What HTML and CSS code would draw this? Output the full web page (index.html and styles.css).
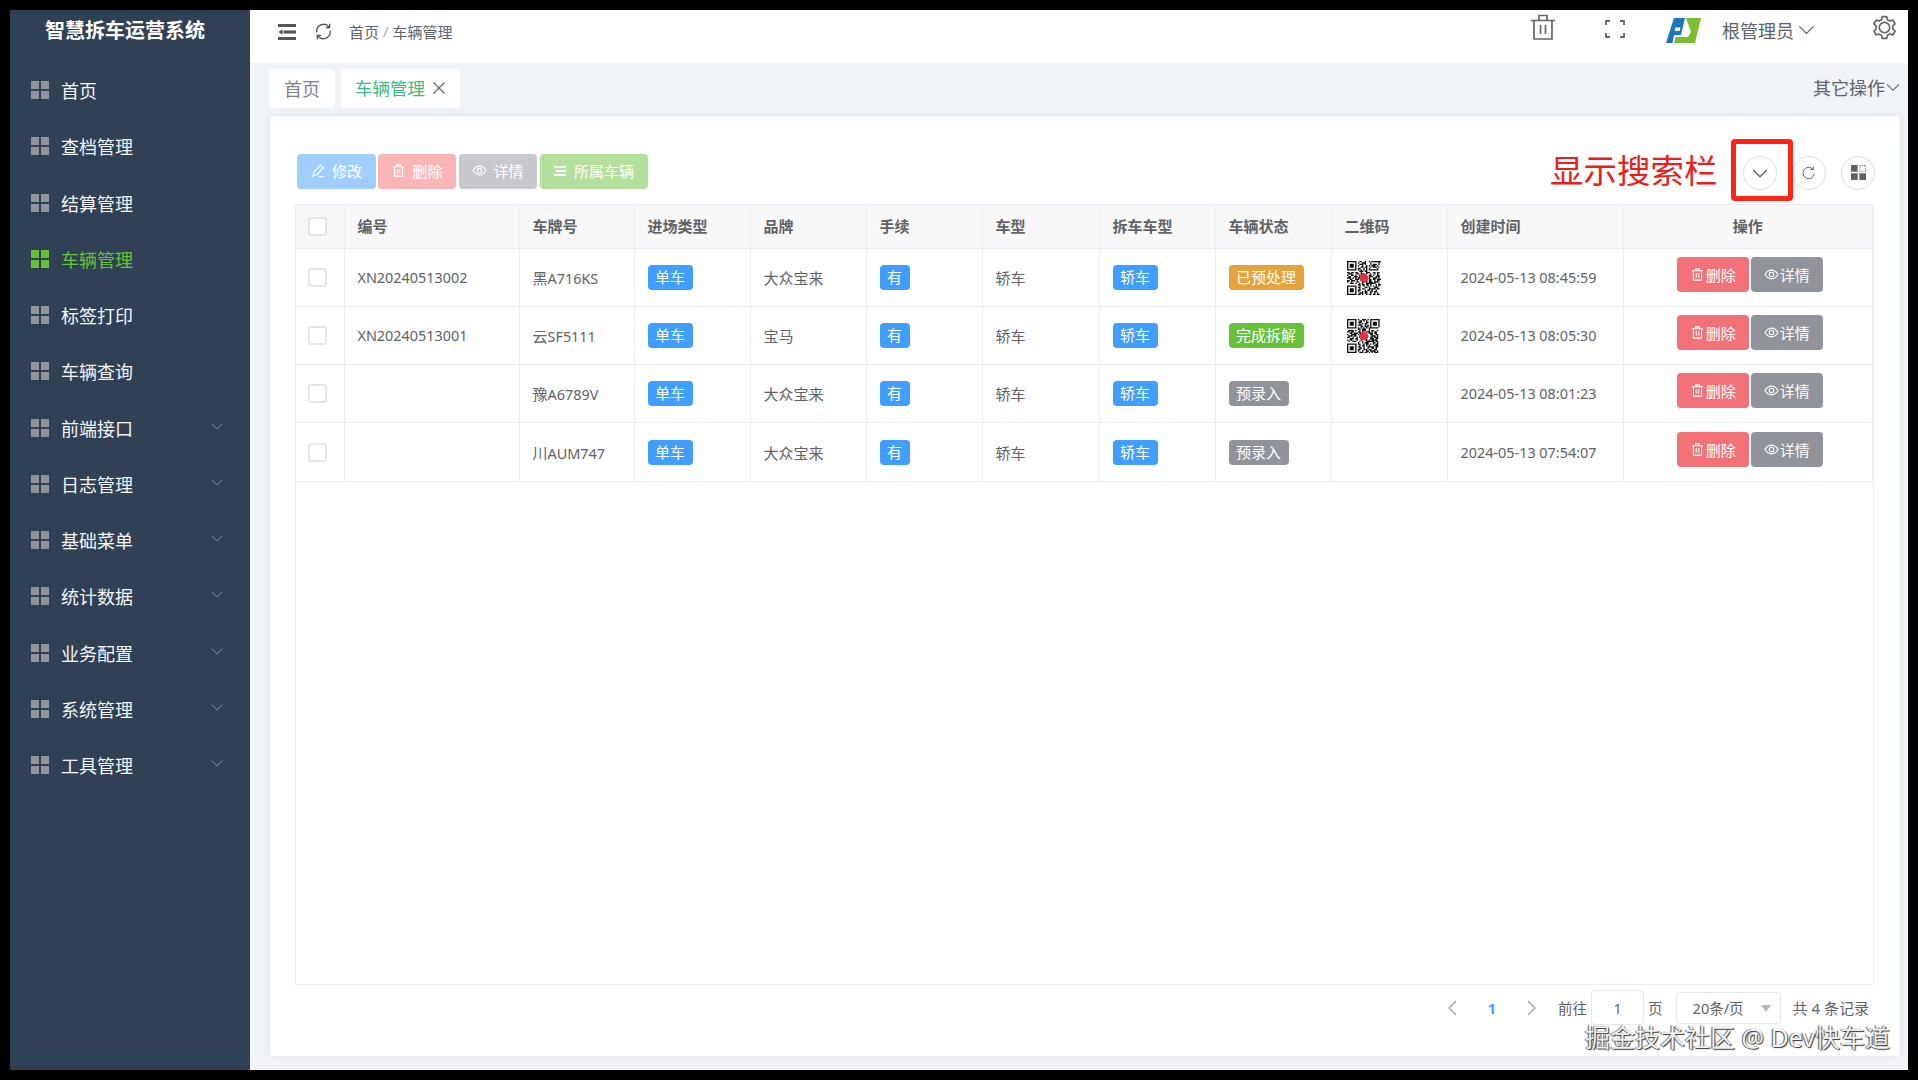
FILE: index.html
```html
<!DOCTYPE html>
<html lang="zh">
<head>
<meta charset="utf-8">
<title>智慧拆车运营系统</title>
<link rel="stylesheet" href="styles.css">
</head>
<body>
<svg class="defs" width="0" height="0">
  <symbol id="i-grid" viewBox="0 0 18 18"><path d="M0 0h8v8H0zM10 0h8v8h-8zM0 10h8v8H0zM10 10h8v8h-8z" fill="currentColor"/></symbol>
  <symbol id="i-down" viewBox="0 0 24 24"><path d="M3 8l9 9 9-9" fill="none" stroke="currentColor" stroke-width="1.6"/></symbol>
  <symbol id="i-trash" viewBox="0 0 24 24"><path d="M3 6h18M9 6V3h6v3M5.500 6v15h13V6M10 10v7M14 10v7" fill="none" stroke="currentColor" stroke-width="1.700"/></symbol>
  <symbol id="i-eye" viewBox="0 0 24 24"><path d="M1.500 12C5 6.500 8.500 5 12 5s7 1.500 10.500 7C19 17.500 15.500 19 12 19s-7-1.500-10.500-7z" fill="none" stroke="currentColor" stroke-width="1.700"/><circle cx="12" cy="12" r="3.600" fill="none" stroke="currentColor" stroke-width="1.700"/></symbol>
  <symbol id="i-edit" viewBox="0 0 24 24"><path d="M3 21l1.500-6L15 3.500l4.500 4L9 19zM12 22h10" fill="none" stroke="currentColor" stroke-width="1.700"/></symbol>
  <symbol id="i-qr1" viewBox="0 0 25 25"><path fill="none" stroke="#111" d="M0 .5h7m2 0h2m2 0h1m2 0h1m1 0h7M0 1.500h1m5 0h1m1 0h1m2 0h3m3 0h1m5 0h1M0 2.500h1m1 0h3m1 0h1m2 0h3m1 0h1m3 0h1m1 0h3m1 0h1M0 3.500h1m1 0h3m1 0h1m1 0h1m2 0h1m2 0h1m1 0h1m1 0h3m1 0h1M0 4.500h1m1 0h3m1 0h1m3 0h2m1 0h2m2 0h1m1 0h3m1 0h1M0 5.500h1m5 0h1m1 0h2m2 0h1m1 0h1m1 0h1m5 0h1M0 6.500h7m1 0h1m1 0h1m1 0h1m1 0h1m1 0h7M9 7.500h3m1 0h2M0 8.500h2m1 0h2m1 0h2m2 0h1m3 0h3m2 0h2m1 0h2M1 9.500h3m3 0h2m1 0h3m1 0h1m2 0h1m2 0h1m1 0h1M0 10.500h1m2 0h2m1 0h1m2 0h1m6 0h2m1 0h1m2 0h2M1 11.500h2m2 0h3m1 0h1m6 0h3m2 0h3M0 12.500h3m1 0h1m1 0h1m1 0h2m6 0h1m2 0h3m1 0h1M2 13.500h2m2 0h3m1 0h1m5 0h2m1 0h2m1 0h3M0 14.500h2m1 0h3m1 0h1m2 0h1m3 0h1m1 0h2m2 0h1m1 0h2M0 15.500h1m2 0h1m3 0h2m2 0h2m1 0h1m1 0h3m1 0h3M2 16.500h3m1 0h1m2 0h1m1 0h1m2 0h7m2 0h1M8 17.500h2m1 0h2m1 0h2m1 0h1m3 0h1m1 0h2M0 18.500h7m2 0h1m2 0h1m2 0h1m1 0h1m1 0h1m1 0h1m1 0h1M0 19.500h1m5 0h1m1 0h2m3 0h2m1 0h1m3 0h3M0 20.500h1m1 0h3m1 0h1m2 0h1m1 0h2m3 0h5m1 0h2M0 21.500h1m1 0h3m1 0h1m1 0h2m3 0h1m1 0h2m1 0h1m2 0h1M0 22.500h1m1 0h3m1 0h1m1 0h1m2 0h1m1 0h2m2 0h2m1 0h2M0 23.500h1m5 0h1m2 0h3m1 0h2m2 0h1m2 0h1m1 0h1M0 24.500h7m1 0h2m1 0h1m2 0h1m1 0h2m1 0h2m1 0h2"/><circle cx="12.500" cy="12.500" r="3.200" fill="#e8303c"/></symbol>
  <symbol id="i-qr2" viewBox="0 0 25 25"><path fill="none" stroke="#111" d="M0 .5h7m1 0h1m2 0h3m1 0h1m1 0h7M0 1.500h1m5 0h1m2 0h2m1 0h1m1 0h1m2 0h1m5 0h1M0 2.500h1m1 0h3m1 0h1m1 0h3m3 0h2m1 0h1m1 0h3m1 0h1M0 3.500h1m1 0h3m1 0h1m2 0h1m1 0h1m1 0h2m2 0h1m1 0h3m1 0h1M0 4.500h1m1 0h3m1 0h1m1 0h3m2 0h1m1 0h1m1 0h1m1 0h3m1 0h1M0 5.500h1m5 0h1m3 0h2m1 0h3m1 0h1m5 0h1M0 6.500h7m1 0h1m1 0h1m1 0h1m1 0h1m1 0h7M8 7.500h2m1 0h3m2 0h1M1 8.500h4m1 0h1m2 0h1m1 0h3m2 0h1m1 0h2m2 0h1M0 9.500h2m1 0h2m3 0h2m1 0h1m2 0h3m1 0h1m1 0h2M2 10.500h2m1 0h3m1 0h2m5 0h3m1 0h2M0 11.500h1m2 0h4m1 0h1m1 0h1m6 0h2m2 0h2M1 12.500h3m1 0h2m2 0h2m7 0h3m1 0h1M0 13.500h2m2 0h1m2 0h1m1 0h2m6 0h2m1 0h3M2 14.500h3m1 0h2m2 0h1m3 0h1m2 0h3m1 0h2M0 15.500h1m1 0h2m3 0h1m2 0h1m2 0h2m1 0h1m1 0h4M1 16.500h1m2 0h3m2 0h1m1 0h1m2 0h6m1 0h2M8 17.500h1m2 0h1m1 0h3m3 0h2m1 0h1M0 18.500h7m1 0h2m2 0h1m1 0h2m1 0h1m1 0h1m1 0h2M0 19.500h1m5 0h1m2 0h1m1 0h2m1 0h1m1 0h1m3 0h3M0 20.500h1m1 0h3m1 0h1m1 0h2m2 0h1m2 0h5m1 0h2M0 21.500h1m1 0h3m1 0h1m2 0h2m1 0h1m2 0h1m2 0h2m1 0h1M0 22.500h1m1 0h3m1 0h1m1 0h2m2 0h3m1 0h2m2 0h2M0 23.500h1m5 0h1m1 0h1m2 0h1m2 0h2m1 0h4m1 0h1M0 24.500h7m2 0h3m1 0h2m1 0h1m1 0h1m1 0h3"/><circle cx="12.500" cy="12.500" r="3.200" fill="#e8303c"/></symbol>
</svg>
<div class="frame">
  <aside class="sidebar">
    <div class="brand">智慧拆车运营系统</div>
    <nav class="menu">
      <a class="menu-item"><svg class="m-icon"><use href="#i-grid"/></svg><span>首页</span></a>
      <a class="menu-item"><svg class="m-icon"><use href="#i-grid"/></svg><span>查档管理</span></a>
      <a class="menu-item"><svg class="m-icon"><use href="#i-grid"/></svg><span>结算管理</span></a>
      <a class="menu-item active"><svg class="m-icon"><use href="#i-grid"/></svg><span>车辆管理</span></a>
      <a class="menu-item"><svg class="m-icon"><use href="#i-grid"/></svg><span>标签打印</span></a>
      <a class="menu-item"><svg class="m-icon"><use href="#i-grid"/></svg><span>车辆查询</span></a>
      <a class="menu-item"><svg class="m-icon"><use href="#i-grid"/></svg><span>前端接口</span><svg class="m-arrow"><use href="#i-down"/></svg></a>
      <a class="menu-item"><svg class="m-icon"><use href="#i-grid"/></svg><span>日志管理</span><svg class="m-arrow"><use href="#i-down"/></svg></a>
      <a class="menu-item"><svg class="m-icon"><use href="#i-grid"/></svg><span>基础菜单</span><svg class="m-arrow"><use href="#i-down"/></svg></a>
      <a class="menu-item"><svg class="m-icon"><use href="#i-grid"/></svg><span>统计数据</span><svg class="m-arrow"><use href="#i-down"/></svg></a>
      <a class="menu-item"><svg class="m-icon"><use href="#i-grid"/></svg><span>业务配置</span><svg class="m-arrow"><use href="#i-down"/></svg></a>
      <a class="menu-item"><svg class="m-icon"><use href="#i-grid"/></svg><span>系统管理</span><svg class="m-arrow"><use href="#i-down"/></svg></a>
      <a class="menu-item"><svg class="m-icon"><use href="#i-grid"/></svg><span>工具管理</span><svg class="m-arrow"><use href="#i-down"/></svg></a>
    </nav>
  </aside>
  <main class="main">
    <header class="topbar">
      <svg class="hamburger" viewBox="0 0 18 16"><path d="M0 0h18v3H0zM5.500 6.500H18v3H5.500zM0 13h18v3H0zM4.500 5.200v5.600L.5 8z" fill="#555"/></svg>
      <svg class="reload" viewBox="0 0 24 24"><path d="M3.500 13A8.800 8.800 0 0 1 19 6.200M20.500 11A8.800 8.800 0 0 1 5 17.800M19.800 2.200V7h-4.800M4.200 21.800V17H9" fill="none" stroke="#555" stroke-width="1.700"/></svg>
      <div class="crumbs"><span>首页</span><i>/</i><span>车辆管理</span></div>
      <div class="top-right">
        <svg class="t-trash" viewBox="0 0 24 26"><path d="M0 6.500h24M8 6.500V1.500h8v5M3 6.500V25h18V6.500M9.500 11v9M14.500 11v9" fill="none" stroke="#666" stroke-width="1.700"/></svg>
        <svg class="t-full" viewBox="0 0 20 18"><path d="M1 5V1h4M15 1h4v4M1 13v4h4M15 17h4v-4" fill="none" stroke="#666" stroke-width="1.800"/></svg>
        <svg class="t-logo" viewBox="0 0 35 25"><path fill-rule="evenodd" d="M0 25L8 0h11l-4 17H8l-1.500 8zM9.500 9.500h5l-1 3.500h-5z" fill="#1b75b8"/><path d="M20 0h15l-6 25H8l1.500-6h12.500L25 14z" fill="#7dbb2f"/></svg>
        <div class="user"><span>根管理员</span><svg class="u-arrow"><use href="#i-down"/></svg></div>
        <svg class="t-gear" viewBox="0 0 24 24"><path d="M9.800 1.500h4.400l.6 3 2.300 1.300 2.900-1 2.200 3.800-2.300 2a8 8 0 0 1 0 2.800l2.300 2-2.200 3.800-2.900-1-2.300 1.300-.6 3H9.800l-.6-3-2.300-1.300-2.900 1-2.200-3.800 2.300-2a8 8 0 0 1 0-2.800l-2.300-2 2.200-3.800 2.900 1 2.300-1.300z" fill="none" stroke="#666" stroke-width="1.600" stroke-linejoin="round"/><circle cx="12" cy="12" r="5" fill="none" stroke="#666" stroke-width="1.600"/></svg>
      </div>
    </header>
    <div class="tabbar">
      <div class="tab">首页</div>
      <div class="tab current">车辆管理<svg class="tab-x" viewBox="0 0 12 12"><path d="M.5.5l11 11M11.500.5l-11 11" stroke="#666" stroke-width="1.200"/></svg></div>
      <div class="tab-more">其它操作<svg class="more-arrow"><use href="#i-down"/></svg></div>
    </div>
    <section class="card">
      <div class="toolbar">
        <div class="actions">
          <button class="btn primary"><svg class="b-icon"><use href="#i-edit"/></svg>修改</button>
          <button class="btn danger"><svg class="b-icon"><use href="#i-trash"/></svg>删除</button>
          <button class="btn muted"><svg class="b-icon"><use href="#i-eye"/></svg>详情</button>
          <button class="btn success"><svg class="b-icon" viewBox="0 0 12 10"><path d="M0 0h12v2H0zM1.500 4h10.500v2H1.500zM0 8h12v2H0z" fill="currentColor"/></svg>所属车辆</button>
        </div>
        <div class="tools">
          <button class="circle"><svg class="c-down"><use href="#i-down"/></svg></button>
          <button class="circle"><svg class="c-reload" viewBox="0 0 24 24"><path d="M20 13a8.500 8.500 0 1 1-2.600-7.100M18.500 2v4.800h-4.800" fill="none" stroke="#606266" stroke-width="1.500"/></svg></button>
          <button class="circle"><svg class="c-grid" viewBox="0 0 18 18"><path d="M0 0h8v8H0zM0 10h8v8H0zM10 10h8v8h-8z" fill="#606266"/><path d="M10.500.5h7v7h-7z" fill="none" stroke="#606266" stroke-dasharray="1.500 1"/></svg></button>
        </div>
      </div>
      <div class="note">显示搜索栏</div>
      <div class="note-box"></div>
      <div class="table-wrap">
        <table class="grid">
          <colgroup><col class="c0"><col class="c1"><col class="c2"><col class="c3"><col class="c4"><col class="c5"><col class="c6"><col class="c7"><col class="c8"><col class="c9"><col class="c10"><col class="c11"></colgroup>
          <thead>
            <tr><th class="chk"><span class="box"></span></th><th>编号</th><th>车牌号</th><th>进场类型</th><th>品牌</th><th>手续</th><th>车型</th><th>拆车车型</th><th>车辆状态</th><th>二维码</th><th>创建时间</th><th class="center">操作</th></tr>
          </thead>
          <tbody>
            <tr><td class="chk"><span class="box"></span></td><td class="num">XN20240513002</td><td>黑<span class="num">A716KS</span></td><td><span class="tag blue">单车</span></td><td>大众宝来</td><td><span class="tag blue">有</span></td><td>轿车</td><td><span class="tag blue">轿车</span></td><td><span class="tag orange">已预处理</span></td><td><svg class="qr"><use href="#i-qr1"/></svg></td><td class="num">2024-05-13 08:45:59</td><td class="ops"><div class="op-row"><button class="op del"><svg class="o-icon"><use href="#i-trash"/></svg>删除</button><button class="op view"><svg class="o-icon"><use href="#i-eye"/></svg>详情</button></div></td></tr>
            <tr><td class="chk"><span class="box"></span></td><td class="num">XN20240513001</td><td>云<span class="num">SF5111</span></td><td><span class="tag blue">单车</span></td><td>宝马</td><td><span class="tag blue">有</span></td><td>轿车</td><td><span class="tag blue">轿车</span></td><td><span class="tag green">完成拆解</span></td><td><svg class="qr"><use href="#i-qr2"/></svg></td><td class="num">2024-05-13 08:05:30</td><td class="ops"><div class="op-row"><button class="op del"><svg class="o-icon"><use href="#i-trash"/></svg>删除</button><button class="op view"><svg class="o-icon"><use href="#i-eye"/></svg>详情</button></div></td></tr>
            <tr><td class="chk"><span class="box"></span></td><td></td><td>豫<span class="num">A6789V</span></td><td><span class="tag blue">单车</span></td><td>大众宝来</td><td><span class="tag blue">有</span></td><td>轿车</td><td><span class="tag blue">轿车</span></td><td><span class="tag gray">预录入</span></td><td></td><td class="num">2024-05-13 08:01:23</td><td class="ops"><div class="op-row"><button class="op del"><svg class="o-icon"><use href="#i-trash"/></svg>删除</button><button class="op view"><svg class="o-icon"><use href="#i-eye"/></svg>详情</button></div></td></tr>
            <tr><td class="chk"><span class="box"></span></td><td></td><td>川<span class="num">AUM747</span></td><td><span class="tag blue">单车</span></td><td>大众宝来</td><td><span class="tag blue">有</span></td><td>轿车</td><td><span class="tag blue">轿车</span></td><td><span class="tag gray">预录入</span></td><td></td><td class="num">2024-05-13 07:54:07</td><td class="ops"><div class="op-row"><button class="op del"><svg class="o-icon"><use href="#i-trash"/></svg>删除</button><button class="op view"><svg class="o-icon"><use href="#i-eye"/></svg>详情</button></div></td></tr>
          </tbody>
        </table>
      </div>
      <div class="pager">
        <svg class="p-arrow prev" viewBox="0 0 10 16"><path d="M9 1L2 8l7 7" fill="none" stroke="#a8abb2" stroke-width="1.600"/></svg>
        <span class="p-num">1</span>
        <svg class="p-arrow next" viewBox="0 0 10 16"><path d="M1 1l7 7-7 7" fill="none" stroke="#a8abb2" stroke-width="1.600"/></svg>
        <span class="p-goto">前往</span>
        <span class="p-input">1</span>
        <span class="p-page">页</span>
        <span class="p-select">20条/页<i class="caret"></i></span>
        <span class="p-total">共 4 条记录</span>
      </div>
    </section>
  </main>
</div>
<div class="watermark">掘金技术社区 @ Dev快车道</div>
</body>
</html>
```
FILE: styles.css
```css
* { box-sizing: border-box; }
html, body { margin: 0; padding: 0; }
body {
  width: 1918px;
  height: 1080px;
  background: #000;
  padding: 10px;
  overflow: hidden;
  position: relative;
  font-family: "Noto Sans", "Noto Sans CJK SC", sans-serif;
  color: #606266;
}
.defs { position: absolute; }
svg { display: block; flex: none; }
button { font-family: inherit; padding: 0; border: 0; cursor: pointer; }

.frame { display: flex; width: 1898px; height: 1060px; background: #f0f3f8; }

.sidebar { width: 240px; background: #304156; flex: none; }
.brand { height: 52px; padding: 0 10px 10px 0; display: flex; align-items: center; justify-content: center; color: #fff; font-size: 20px; font-weight: 700; line-height: 42px; }
.menu { display: flex; flex-direction: column; }
.menu-item { height: 56.25px; display: flex; align-items: center; padding: 0 26px 0 21px; color: #f4f6fa; font-size: 18px; }
.menu-item.active { color: #67c23a; }
.m-icon { width: 18px; height: 18px; margin-right: 12px; color: #909399; }
.menu-item.active .m-icon { color: #67c23a; }
.m-arrow { width: 14px; height: 14px; margin-left: auto; color: #8a96a6; position: relative; top: -2px; }

.main { flex: 1; display: flex; flex-direction: column; min-width: 0; }
.topbar { height: 53px; background: #fff; display: flex; align-items: center; padding: 0 11px 10px 28px; flex: none; }
.hamburger { width: 18px; height: 16px; margin-right: 18px; }
.reload { width: 19px; height: 19px; margin-right: 16px; }
.crumbs { display: flex; gap: 4px; font-size: 15px; color: #606266; }
.crumbs i { font-style: normal; color: #a8abb2; }
.top-right { margin-left: auto; display: flex; align-items: center; color: #555; }
.t-trash { width: 24px; height: 26px; margin-right: 50px; position: relative; top: -5px; }
.t-full { width: 20px; height: 18px; margin-right: 41px; position: relative; top: -3px; }
.t-logo { width: 35px; height: 25px; margin-right: 21px; position: relative; top: -1px; }
.user { display: flex; align-items: center; font-size: 18px; color: #606266; margin-right: 56px; position: relative; top: -2px; }
.u-arrow { width: 19px; height: 19px; margin-left: 3px; color: #606266; }
.t-gear { width: 25px; height: 25px; position: relative; top: -4px; }

.tabbar { height: 53px; display: flex; align-items: flex-start; gap: 6px; padding: 6px 7px 0 19px; flex: none; }
.tab { height: 39px; padding: 0 15px 2px; background: #fff; border-radius: 4px; display: flex; align-items: center; font-size: 18px; color: #808388; }
.tab.current { color: #42b983; font-size: 17.500px; padding-left: 14px; }
.tab-x { width: 12px; height: 12px; margin-left: 8px; }
.tab-more { margin-left: auto; height: 39px; padding-bottom: 3px; display: flex; align-items: center; font-size: 18px; color: #606266; }
.more-arrow { width: 16px; height: 16px; color: #606266; }

.card { position: relative; flex: 1; margin: 0 8px 14px 20px; background: #fff; border-radius: 4px; box-shadow: 0 0 10px rgba(0, 0, 0, .07); padding: 38px 26px 0 25px; display: flex; flex-direction: column; }
.toolbar { display: flex; justify-content: space-between; align-items: center; height: 35px; margin-bottom: 15px; padding-left: 2px; flex: none; }
.actions { display: flex; gap: 2px; }
.btn { height: 35px; border-radius: 4px; color: #fff; font-size: 15px; display: flex; align-items: center; justify-content: center; gap: 6px; padding-bottom: 2px; }
.b-icon { width: 15px; height: 15px; }
.btn.primary { background: #a0cfff; width: 79px; }
.btn.danger { background: #fab6b6; width: 78px; }
.btn.muted { background: #c8c9cc; width: 78px; margin-left: 1px; }
.btn.success { background: #b3e19d; width: 108px; margin-left: 1px; gap: 8px; }
.btn.success .b-icon { width: 12px; height: 10px; }
.tools { display: flex; gap: 15px; margin-right: -1px; }
.circle { width: 34px; height: 34px; border-radius: 50%; border: 1px solid #dcdfe6; background: #fff; display: flex; align-items: center; justify-content: center; position: relative; top: 1px; }
.c-down { width: 18px; height: 18px; color: #555; }
.c-reload { width: 16px; height: 16px; }
.c-grid { width: 15px; height: 15px; }

.note { position: absolute; left: 1280px; top: 32px; font-size: 33.500px; line-height: 44px; color: #e8211a; white-space: nowrap; }
.note-box { position: absolute; left: 1461px; top: 23px; width: 62px; height: 62px; border: 5px solid #ff2416; border-radius: 4px; }

.table-wrap { height: 781px; border: 1px solid #ebeef5; flex: none; }
.grid { width: 100%; border-collapse: collapse; table-layout: fixed; font-size: 15px; }
.c0 { width: 48px; } .c1 { width: 175px; } .c2 { width: 115px; } .c3 { width: 116px; } .c4 { width: 116px; } .c5 { width: 116px; } .c6 { width: 117px; } .c7 { width: 116px; } .c8 { width: 116px; } .c9 { width: 116px; } .c10 { width: 176px; }
.grid th { height: 43px; background: #f8f8f9; font-weight: 700; text-align: left; padding: 0 13px 2px; border-right: 1px solid #ebeef5; border-bottom: 1px solid #ebeef5; color: #606266; white-space: nowrap; }
.grid td { height: 58.330px; padding: 0 13px; border-right: 1px solid #ebeef5; border-bottom: 1px solid #ebeef5; color: #606266; white-space: nowrap; }
.num { font-size: 14.400px; }
.grid th.center { text-align: center; }
.grid .chk { padding: 0 0 0 12px; }
.box { display: block; width: 19px; height: 19px; border: 2px solid #e4e6ea; border-radius: 3px; background: #fff; }
.tag { display: inline-flex; align-items: center; justify-content: center; height: 25px; padding: 0 7.500px; border-radius: 4px; color: #fff; font-size: 15px; vertical-align: middle; line-height: 1; }
.tag.blue { background: #409eff; }
.tag.orange { background: #e6a23c; }
.tag.green { background: #67c23a; }
.tag.gray { background: #909399; }
.qr { width: 34px; height: 34px; margin-left: 2px; position: relative; top: 1px; }
.grid .ops { padding: 0; }
.op-row { display: flex; gap: 2px; justify-content: center; position: relative; top: -3px; left: 2px; }
.op { width: 72px; height: 35px; border-radius: 4px; color: #fff; font-size: 15px; display: flex; align-items: center; justify-content: center; gap: 1px; }
.o-icon { width: 15px; height: 15px; }
.op.del { background: #f37277; }
.op.view { background: #909399; }

.pager { flex: 1; display: flex; align-items: center; justify-content: flex-end; font-size: 14.500px; color: #606266; padding: 0 5px 26px 0; }
.p-arrow { width: 10px; height: 16px; }
.prev { margin-right: 31px; }
.p-num { color: #409eff; font-weight: 700; margin-right: 31px; }
.next { margin-right: 21px; }
.p-goto { margin-right: 4px; }
.p-input { width: 53px; height: 35px; border: 1px solid #e4e7ed; border-radius: 4px; display: flex; align-items: center; justify-content: center; margin-right: 4px; }
.p-page { margin-right: 13px; }
.p-select { width: 105px; height: 32px; border: 1px solid #e4e7ed; border-radius: 4px; display: flex; align-items: center; padding-left: 16px; position: relative; margin-right: 12px; }
.caret { position: absolute; right: 9px; top: 12px; border-left: 5.500px solid transparent; border-right: 5.500px solid transparent; border-top: 7px solid #b5b8be; }
.p-total { font-size: 15px; }

.watermark { position: absolute; left: 1585px; top: 1019px; font-size: 25px; line-height: 36px; color: #f2f2f2; text-shadow: 1px 1px 1px #333, -1px 0 1px #555; white-space: nowrap; }
```
